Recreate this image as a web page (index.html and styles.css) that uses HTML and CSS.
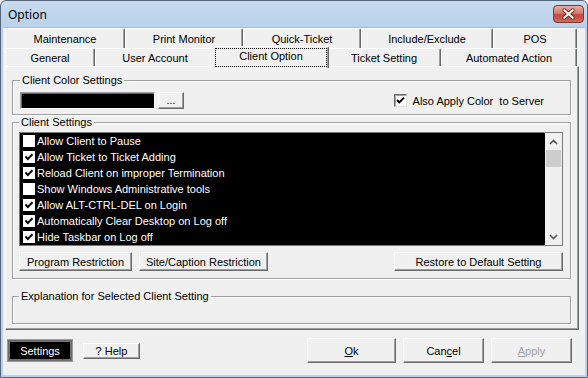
FILE: index.html
```html
<!DOCTYPE html>
<html lang="en">
<head>
    <meta charset="UTF-8">
    <title>Option</title>
    <link rel="stylesheet" href="styles.css">
</head>
<body>
    <div class="window">
        <div class="titlebar">
            <span class="title">Option</span>
            <button class="close">
                <svg width="31" height="18" viewBox="0 0 31 18">
                    <path d="M11 5 L20 13 M20 5 L11 13" stroke="#6b2019" stroke-width="4.2" stroke-linecap="round"/>
                    <path d="M11 5 L20 13 M20 5 L11 13" stroke="#fff" stroke-width="2.4" stroke-linecap="round"/>
                </svg>
            </button>
        </div>
        <div class="client">
            <div class="tabs">
                <div class="tab-row row-back">
                    <div class="tab">Maintenance</div>
                    <div class="tab">Print Monitor</div>
                    <div class="tab">Quick-Ticket</div>
                    <div class="tab">Include/Exclude</div>
                    <div class="tab">POS</div>
                </div>
                <div class="tab-row row-front">
                    <div class="tab">General</div>
                    <div class="tab">User Account</div>
                    <div class="tab selected"><span class="focus">Client Option</span></div>
                    <div class="tab">Ticket Setting</div>
                    <div class="tab">Automated Action</div>
                </div>
            </div>
            <div class="panel">
                <fieldset class="group color-group">
                    <legend>Client Color Settings</legend>
                    <div class="color-row">
                        <div class="swatch"></div>
                        <button class="btn dots">...</button>
                        <label class="apply-check">
                            <span class="cbox sunken">
                                <svg width="11" height="11" viewBox="0 0 11 11"><polyline points="2,5 4.3,7.4 9,2.6" fill="none" stroke="#000" stroke-width="2"/></svg>
                            </span>
                            Also Apply Color&nbsp; to Server
                        </label>
                    </div>
                </fieldset>
                <fieldset class="group settings-group">
                    <legend>Client Settings</legend>
                    <div class="listbox">
                        <ul class="items">
                            <li><span class="cbox"></span>Allow Client to Pause</li>
                            <li><span class="cbox"><svg width="12" height="12" viewBox="0 0 12 12"><polyline points="2.5,5.5 4.8,8 9.5,3.2" fill="none" stroke="#000" stroke-width="2"/></svg></span>Allow Ticket to Ticket Adding</li>
                            <li><span class="cbox"><svg width="12" height="12" viewBox="0 0 12 12"><polyline points="2.5,5.5 4.8,8 9.5,3.2" fill="none" stroke="#000" stroke-width="2"/></svg></span>Reload Client on improper Termination</li>
                            <li><span class="cbox"></span>Show Windows Administrative tools</li>
                            <li><span class="cbox"><svg width="12" height="12" viewBox="0 0 12 12"><polyline points="2.5,5.5 4.8,8 9.5,3.2" fill="none" stroke="#000" stroke-width="2"/></svg></span>Allow ALT-CTRL-DEL on Login</li>
                            <li><span class="cbox"><svg width="12" height="12" viewBox="0 0 12 12"><polyline points="2.5,5.5 4.8,8 9.5,3.2" fill="none" stroke="#000" stroke-width="2"/></svg></span>Automatically Clear Desktop on Log off</li>
                            <li><span class="cbox"><svg width="12" height="12" viewBox="0 0 12 12"><polyline points="2.5,5.5 4.8,8 9.5,3.2" fill="none" stroke="#000" stroke-width="2"/></svg></span>Hide Taskbar on Log off</li>
                        </ul>
                        <div class="scrollbar">
                            <span class="arrow">
                                <svg width="9" height="6" viewBox="0 0 9 6"><polyline points="1,5 4.5,1.5 8,5" fill="none" stroke="#555" stroke-width="1.6"/></svg>
                            </span>
                            <span class="thumb"></span>
                            <span class="track"></span>
                            <span class="arrow">
                                <svg width="9" height="6" viewBox="0 0 9 6"><polyline points="1,1 4.5,4.5 8,1" fill="none" stroke="#555" stroke-width="1.6"/></svg>
                            </span>
                        </div>
                    </div>
                    <div class="button-row">
                        <button class="btn program">Program Restriction</button>
                        <button class="btn site">Site/Caption Restriction</button>
                        <button class="btn restore">Restore to Default Setting</button>
                    </div>
                </fieldset>
                <fieldset class="group explain-group">
                    <legend>Explanation for Selected Client Setting</legend>
                </fieldset>
            </div>
            <div class="footer">
                <button class="btn settings">Settings</button>
                <button class="btn help">? Help</button>
                <button class="btn ok"><u>O</u>k</button>
                <button class="btn cancel">Can<u>c</u>el</button>
                <button class="btn apply" disabled><u>A</u>pply</button>
            </div>
        </div>
    </div>
</body>
</html>
```

FILE: styles.css
```css
body {
    margin: 0;
    background-color: #fff;
    font-family: "Liberation Sans", Arial, sans-serif;
    font-size: 11px;
}

.window {
    width: 588px;
    height: 378px;
    box-sizing: border-box;
    border: 1px solid #55657a;
    border-radius: 6px 6px 0 0;
    background: linear-gradient(#c9dbef, #b9d1ea 26px, #b9d1ea);
    padding: 0 2px 2px;
    display: flex;
    flex-direction: column;
}

.titlebar {
    height: 26px;
    display: flex;
    align-items: center;
    padding-left: 5px;
}

.title {
    font-family: "Noto Sans", sans-serif;
    font-size: 12px;
    color: #000;
}

.close {
    margin-left: auto;
    margin-right: 1px;
    margin-top: -1px;
    width: 31px;
    height: 18px;
    padding: 0;
    border: 1px solid #7c3a33;
    border-radius: 4px;
    background: linear-gradient(#e9ada3, #d57a6f 45%, #c4483b 55%, #d0695d);
    display: flex;
    align-items: center;
    justify-content: center;
}

.close svg {
    display: block;
}

.client {
    flex: 1;
    background-color: #f0f0f0;
    display: flex;
    flex-direction: column;
    padding: 0 6px 0 2px;
    border-top: 1px solid #a8bdd6;
}

/* tabs */
.tabs {
    width: 572px;
    height: 38px;
}

.tab-row {
    display: flex;
}

.row-back {
    height: 20px;
}

.row-front {
    height: 18px;
}

.tab {
    box-sizing: border-box;
    background-color: #f0f0f0;
    border-top: 1px solid #fff;
    border-left: 1px solid #fff;
    border-right: 1px solid #696969;
    box-shadow: inset -1px 0 #a0a0a0;
    border-radius: 2px 2px 0 0;
    text-align: center;
    line-height: 14px;
    color: #000;
    white-space: nowrap;
}

.row-back .tab {
    padding-top: 3px;
}

.row-front .tab {
    padding-top: 2px;
}

.row-back .tab:nth-child(1) { width: 120px; }
.row-back .tab:nth-child(2) { width: 118px; }
.row-back .tab:nth-child(3) { width: 118px; }
.row-back .tab:nth-child(4) { width: 132px; }
.row-back .tab:nth-child(5) { width: 84px; }

.row-front .tab:nth-child(1) { width: 90px; }
.row-front .tab:nth-child(2) { width: 120px; }
.row-front .tab:nth-child(3) { width: 112px; }
.row-front .tab:nth-child(4) { width: 114px; }
.row-front .tab:nth-child(5) { width: 136px; }

.row-front .tab.selected {
    position: relative;
    z-index: 1;
    width: 116px;
    height: 22px;
    margin: -2px -2px -2px;
    padding: 1px 1px 0 1px;
}

.focus {
    display: block;
    height: 17px;
    border: 1px dotted #000;
    line-height: 15px;
}

/* panel */
.panel {
    width: 574px;
    height: 264px;
    box-sizing: border-box;
    border-top: 1px solid #fff;
    border-left: 1px solid #fff;
    border-right: 1px solid #696969;
    border-bottom: 1px solid #696969;
    box-shadow: inset -1px -1px #a0a0a0;
    padding: 7px 7px 0 6px;
}

.group {
    margin: 0;
    padding: 0 7px 0 6px;
    border: 1px solid #a0a0a0;
    box-shadow: inset 1px 1px #fff, 1px 1px #fff;
    min-width: 0;
}

.group legend {
    padding: 0 2px;
    margin-left: 0;
    line-height: 13px;
    background-color: #f0f0f0;
    color: #000;
}

.color-group {
    padding: 5px 7px 5px 7px;
}

.color-row {
    display: flex;
    align-items: center;
    height: 17px;
}

.swatch {
    width: 135px;
    height: 17px;
    box-sizing: border-box;
    background-color: #000;
    border: 1px solid;
    border-color: #a0a0a0 #fff #fff #a0a0a0;
    box-shadow: inset 1px 1px #696969;
}

.btn {
    box-sizing: border-box;
    background-color: #f0f0f0;
    border: 1px solid;
    border-color: #fff #696969 #696969 #fff;
    box-shadow: inset -1px -1px #a0a0a0;
    font-family: "Liberation Sans", Arial, sans-serif;
    font-size: 11px;
    color: #000;
    padding: 0;
    text-align: center;
}

.dots {
    width: 26px;
    height: 17px;
    margin-left: 3px;
    line-height: 11px;
}

.apply-check {
    margin-left: auto;
    margin-right: 19px;
    display: flex;
    align-items: center;
    color: #000;
}

.cbox {
    box-sizing: border-box;
    width: 12px;
    height: 12px;
    background-color: #fff;
    display: inline-flex;
    align-items: center;
    justify-content: center;
    flex-shrink: 0;
}

.cbox svg {
    display: block;
}

.cbox.sunken {
    width: 13px;
    height: 13px;
    border: 1px solid;
    border-color: #696969 #e3e3e3 #e3e3e3 #696969;
    box-shadow: inset 1px 1px #a0a0a0;
    margin-right: 6px;
}

.settings-group {
    margin-top: 1px;
    padding: 3px 7px 7px 6px;
}

.listbox {
    height: 114px;
    box-sizing: border-box;
    border: 1px solid #7a7a7a;
    background-color: #000;
    display: flex;
}

.items {
    flex: 1;
    list-style: none;
    margin: 0;
    padding: 0;
}

.items li {
    height: 16px;
    display: flex;
    align-items: center;
    padding-left: 3px;
    color: #fff;
    white-space: nowrap;
}

.items .cbox {
    margin-right: 2px;
}

.scrollbar {
    width: 17px;
    background-color: #f0f0f0;
    display: flex;
    flex-direction: column;
}

.arrow {
    height: 17px;
    display: flex;
    align-items: center;
    justify-content: center;
}

.thumb {
    height: 17px;
    margin: 0 1px;
    background-color: #cdcdcd;
}

.track {
    flex: 1;
}

.button-row {
    display: flex;
    margin-top: 6px;
    height: 19px;
}

.button-row .btn {
    height: 19px;
}

.program {
    width: 113px;
}

.site {
    width: 129px;
    margin-left: 7px;
}

.restore {
    width: 169px;
    margin-left: auto;
}

.explain-group {
    margin-top: 11px;
    height: 34px;
    box-sizing: border-box;
}

/* footer buttons */
.footer {
    flex: 1;
    display: flex;
    align-items: center;
    padding: 0 7px 4px 3px;
}

.settings {
    width: 64px;
    height: 21px;
    background-color: #000;
    color: #fff;
    border: 2px solid #6e6e6e;
    box-shadow: 0 0 0 1px #9a9a9a;
}

.help {
    width: 57px;
    height: 16px;
    margin-left: 11px;
}

.ok {
    width: 89px;
    height: 25px;
    margin-left: auto;
}

.cancel {
    width: 81px;
    height: 25px;
    margin-left: 7px;
}

.apply {
    width: 81px;
    height: 25px;
    margin-left: 7px;
    color: #a0a0a0;
}
```
